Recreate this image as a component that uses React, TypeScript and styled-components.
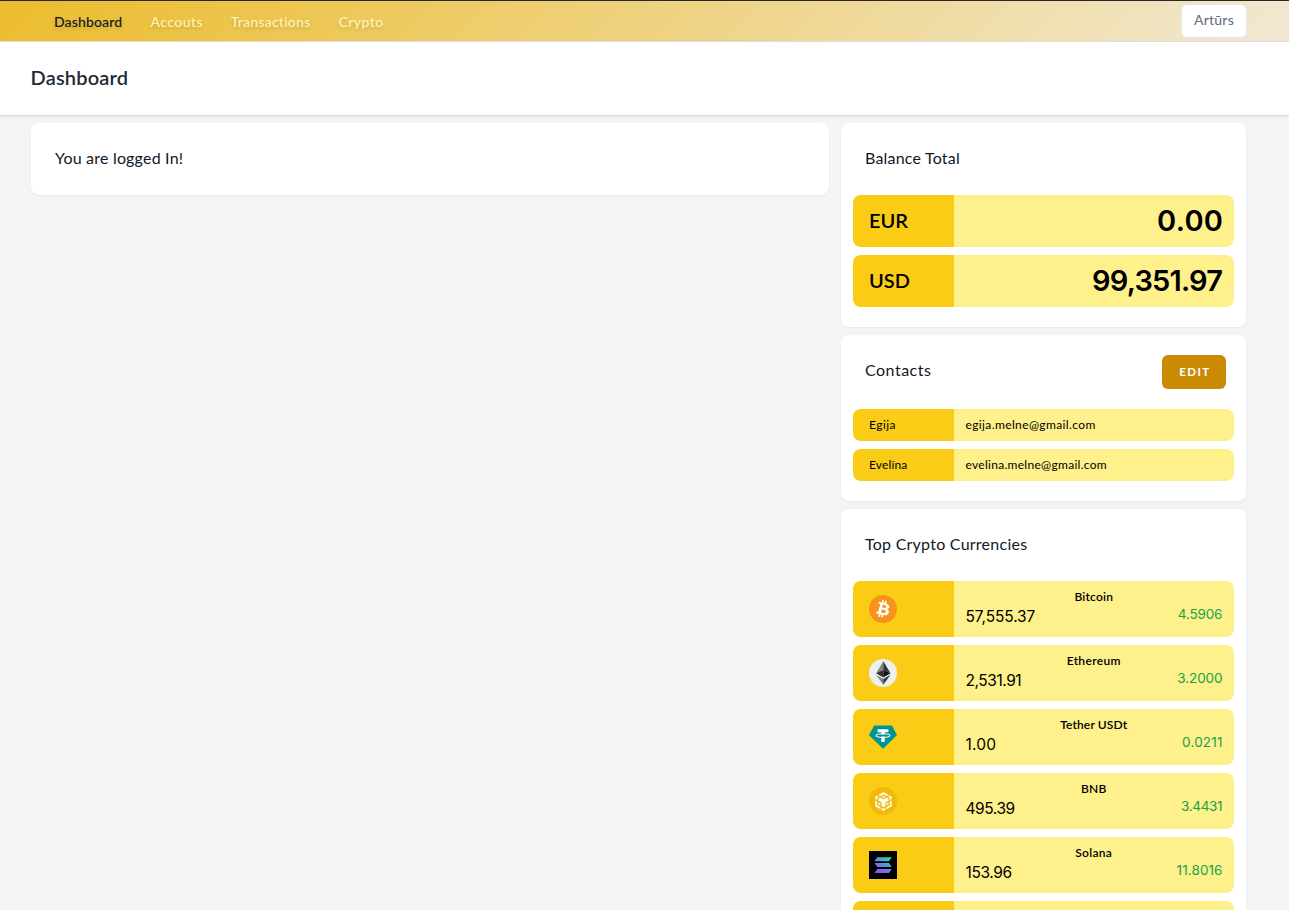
import React from 'react';
import styled, { createGlobalStyle } from 'styled-components';
import { SiBitcoin, SiBnbchain } from 'react-icons/si';

const GlobalStyle = createGlobalStyle`
  *, *::before, *::after { box-sizing: border-box; }
  html, body { height: 100%; }
  body {
    margin: 0;
    overflow: hidden;
    background: #f3f4f6;
    color: #000;
    font-family: Lato, 'Open Sans', sans-serif;
  }
`;

type Tracked = { $track?: number };

const Page = styled.div`
  height: 910px;
  overflow: hidden;
`;

const Nav = styled.nav`
  display: flex;
  justify-content: space-between;
  align-items: flex-start;
  height: 42px;
  padding: 3px 42px 0 54px;
  border-top: 1px solid #29262a;
  border-bottom: 1px solid #e3e3e4;
  background: linear-gradient(135deg, #ecbc2c, #f1e8d2) border-box;
`;

const NavLinks = styled.div`
  display: flex;
  gap: 28px;
  padding-top: 8px;
`;

const NavLink = styled.a<Tracked & { $active?: boolean; $width: number }>`
  width: ${p => p.$width}px;
  white-space: nowrap;
  font-size: 14px;
  font-weight: 500;
  line-height: 20px;
  letter-spacing: ${p => p.$track ?? 0}px;
  color: ${p => (p.$active ? '#111827' : '#fef4b4')};
  text-shadow: 0 2px 4px rgba(0, 0, 0, 0.15);
`;

const UserButton = styled.button`
  width: 66px;
  height: 34px;
  padding: 0 0 2px;
  border: 1px solid #e5e7eb;
  border-radius: 6px;
  background: #fff;
  color: #6b7280;
  font: 500 14px/20px Lato, sans-serif;
  letter-spacing: 0.2px;
`;

const Header = styled.header`
  position: relative;
  height: 73px;
  padding: 23px 31px;
  background: #fff;
  box-shadow: 0 1px 3px rgba(0, 0, 0, 0.1), 0 1px 2px rgba(0, 0, 0, 0.06);
`;

const Title = styled.h1`
  margin: 0 0 0 -0.5px;
  color: #1f2937;
  font-size: 20px;
  font-weight: 600;
  line-height: 25px;
  letter-spacing: 0.2px;
`;

const Main = styled.main`
  display: grid;
  grid-template-columns: 798px 405px;
  column-gap: 12px;
  align-items: start;
  padding: 8px 43px 0 31px;
`;

const Sidebar = styled.div`
  display: flex;
  flex-direction: column;
  gap: 8px;
`;

const Card = styled.section`
  border-radius: 8px;
  background: #fff;
  box-shadow: 0 1px 2px rgba(0, 0, 0, 0.05);
`;

const CardHeader = styled.div<{ $tall?: boolean }>`
  display: flex;
  justify-content: space-between;
  align-items: flex-start;
  height: ${p => (p.$tall ? 74 : 72)}px;
  padding: ${p => (p.$tall ? 20 : 23)}px 20px 0 24px;
`;

const CardTitle = styled.div<Tracked & { $offset?: number }>`
  padding-top: ${p => p.$offset ?? 0}px;
  color: #111827;
  font-size: 16px;
  line-height: 24px;
  letter-spacing: ${p => p.$track ?? 0}px;
`;

const EditButton = styled.button`
  width: 64px;
  height: 34px;
  padding: 0 0 0 2px;
  border: 0;
  border-radius: 6px;
  background: #ca8a04;
  color: #fff;
  font: 700 11.5px/16px Lato, sans-serif;
  letter-spacing: 1.4px;
`;

const Rows = styled.div`
  display: flex;
  flex-direction: column;
  gap: 8px;
  padding: 0 12px 20px;
`;

const Row = styled.div<{ $height: number }>`
  display: grid;
  grid-template-columns: 101px 1fr;
  height: ${p => p.$height}px;
  border-radius: 8px;
  overflow: hidden;
  background: #fef08a;
`;

const RowLabel = styled.div`
  display: flex;
  align-items: center;
  padding-left: 16px;
  background: #facc15;
`;

const Currency = styled.span<Tracked>`
  padding-bottom: 2px;
  font-size: 20px;
  font-weight: 600;
  letter-spacing: ${p => p.$track ?? 0}px;
`;

const Amount = styled.div<Tracked>`
  display: flex;
  justify-content: flex-end;
  align-items: center;
  padding: 0 ${p => 11 - (p.$track ?? 0)}px 1px 12px;
  font-family: Inter, sans-serif;
  font-size: 29px;
  font-weight: 600;
  letter-spacing: ${p => p.$track ?? 0}px;
`;

const Small = styled.span<Tracked>`
  font-size: 12px;
  line-height: 16px;
  letter-spacing: ${p => p.$track ?? 0}px;
`;

const ContactMail = styled.div`
  display: flex;
  align-items: center;
  padding-left: 11.5px;
`;

const CoinInfo = styled.div`
  padding: 8px 12px 0 11.5px;
`;

const CoinName = styled.div<Tracked>`
  text-align: center;
  font-size: 12px;
  font-weight: 600;
  line-height: 16px;
  letter-spacing: ${p => p.$track ?? 0}px;
`;

const CoinNumbers = styled.div`
  display: flex;
  justify-content: space-between;
  align-items: flex-start;
  font-family: Inter, sans-serif;
`;

const Price = styled.span<Tracked>`
  font-size: 15.5px;
  line-height: 24px;
  letter-spacing: ${p => p.$track ?? 0}px;
`;

const Change = styled.span<Tracked>`
  margin-right: ${p => -(p.$track ?? 0) - 0.5}px;
  color: #16a34a;
  font-size: 13.5px;
  line-height: 18px;
  letter-spacing: ${p => p.$track ?? 0}px;
`;

const CoinIcon = styled.span<{ $bg?: string }>`
  display: flex;
  align-items: center;
  justify-content: center;
  width: 28px;
  height: 28px;
  border-radius: 50%;
  background: ${p => p.$bg ?? 'transparent'};

  svg { display: block; }
`;

const SquareIcon = styled(CoinIcon)`
  border-radius: 0;
`;

const Bitcoin = () => (
  <CoinIcon>
    <svg width="28" height="28" viewBox="0 0 28 28">
      <circle cx="14" cy="14" r="12" fill="#fff" />
      <SiBitcoin size={28} color="#f7931a" />
    </svg>
  </CoinIcon>
);

const Ethereum = () => (
  <CoinIcon>
    <svg width="28" height="28" viewBox="0 0 28 28">
      <circle cx="14" cy="14" r="14" fill="#ecf0f1" />
      <path d="M14.3 2.3 7.1 14.2l7.2-3.2z" fill="#828384" />
      <path d="M14.3 2.3v8.7l7.2 3.2z" fill="#343434" />
      <path d="M7.1 14.2l7.2 4.2V11z" fill="#2f3030" />
      <path d="M21.5 14.2l-7.2 4.2V11z" fill="#131313" />
      <path d="M7.1 15.7l7.2 10v-5.8z" fill="#828384" />
      <path d="M21.5 15.7l-7.2 10v-5.8z" fill="#343434" />
    </svg>
  </CoinIcon>
);

const Tether = () => (
  <CoinIcon>
    <svg width="28" height="28" viewBox="0 0 28 28">
      <path d="M5.7 2.6h16.6a1 1 0 0 1 .8.5l4.7 8.3a.9.9 0 0 1-.2 1.1L14.6 25.3a.9.9 0 0 1-1.2 0L.4 12.5a.9.9 0 0 1-.2-1.1l4.7-8.3a1 1 0 0 1 .8-.5z" fill="#009393" />
      <path d="M8.6 6.2h10.8v3.1h-3.7v2.2h-3.4V9.3H8.6z" fill="#fff" />
      <ellipse cx="14" cy="12.6" rx="7" ry="1.9" fill="none" stroke="#fff" strokeWidth="1.1" />
      <path d="M12.3 13.4h3.4v5.6h-3.4z" fill="#fff" />
    </svg>
  </CoinIcon>
);

const Bnb = () => (
  <CoinIcon $bg="#f0b90b">
    <SiBnbchain size={19} color="#fffdf0" />
  </CoinIcon>
);

const Solana = () => (
  <SquareIcon>
    <svg width="28" height="28" viewBox="0 0 28 28">
      <defs>
        <linearGradient id="sol" gradientUnits="userSpaceOnUse" x1="7" y1="23" x2="21" y2="5">
          <stop offset="0" stopColor="#a23cff" />
          <stop offset="0.45" stopColor="#6f7be6" />
          <stop offset="1" stopColor="#14f0a0" />
        </linearGradient>
      </defs>
      <path d="M0 0h28v28H0z" fill="#000" />
      <path d="M8.3 6.2h14.5l-2.9 4H5.4zM5.4 12.1h14.5l2.9 3.9H8.3zM8.3 17.9h14.5l-2.9 4H5.4z" fill="url(#sol)" />
    </svg>
  </SquareIcon>
);

const links = [
  { text: 'Dashboard', width: 68.5, track: 0.15, active: true },
  { text: 'Accouts', width: 52.2, track: 0.45 },
  { text: 'Transactions', width: 79.8, track: 0.25 },
  { text: 'Crypto', width: 46, track: 0.45 },
];

const balances = [
  { code: 'EUR', codeTrack: 0, amount: '0.00', track: 0.3 },
  { code: 'USD', codeTrack: 0, amount: '99,351.97', track: -0.8 },
];

const contacts = [
  { name: 'Egija', nameTrack: 0.45, mail: 'egija.melne@gmail.com', track: 0.38 },
  { name: 'Evelīna', nameTrack: 0.15, mail: 'evelina.melne@gmail.com', track: 0.29 },
];

const coins = [
  { icon: <Bitcoin />, name: 'Bitcoin', nameTrack: 0.2, price: '57,555.37', priceTrack: -0.12, change: '4.5906', changeTrack: -0.15 },
  { icon: <Ethereum />, name: 'Ethereum', nameTrack: 0.35, price: '2,531.91', priceTrack: -0.45, change: '3.2000', changeTrack: -0.1 },
  { icon: <Tether />, name: 'Tether USDt', nameTrack: 0.15, price: '1.00', priceTrack: 0.2, change: '0.0211', changeTrack: 0.2 },
  { icon: <Bnb />, name: 'BNB', nameTrack: 0.15, price: '495.39', priceTrack: -0.45, change: '3.4431', changeTrack: -0.35 },
  { icon: <Solana />, name: 'Solana', nameTrack: 0.3, price: '153.96', priceTrack: -0.4, change: '11.8016', changeTrack: 0.1 },
];

export default function App() {
  return (
    <Page>
      <GlobalStyle />
      <Nav>
        <NavLinks>
          {links.map(l => (
            <NavLink key={l.text} $active={l.active} $width={l.width} $track={l.track}>{l.text}</NavLink>
          ))}
        </NavLinks>
        <UserButton>Artūrs</UserButton>
      </Nav>
      <Header>
        <Title>Dashboard</Title>
      </Header>
      <Main>
        <Card>
          <CardHeader>
            <CardTitle $track={0.2}>You are logged In!</CardTitle>
          </CardHeader>
        </Card>
        <Sidebar>
          <Card>
            <CardHeader>
              <CardTitle $track={0.2}>Balance Total</CardTitle>
            </CardHeader>
            <Rows>
              {balances.map(b => (
                <Row key={b.code} $height={52}>
                  <RowLabel><Currency $track={b.codeTrack}>{b.code}</Currency></RowLabel>
                  <Amount $track={b.track}>{b.amount}</Amount>
                </Row>
              ))}
            </Rows>
          </Card>
          <Card>
            <CardHeader $tall>
              <CardTitle $track={0.5} $offset={3}>Contacts</CardTitle>
              <EditButton>EDIT</EditButton>
            </CardHeader>
            <Rows>
              {contacts.map(c => (
                <Row key={c.mail} $height={32}>
                  <RowLabel><Small $track={c.nameTrack}>{c.name}</Small></RowLabel>
                  <ContactMail><Small $track={c.track}>{c.mail}</Small></ContactMail>
                </Row>
              ))}
            </Rows>
          </Card>
          <Card>
            <CardHeader>
              <CardTitle $track={0.25}>Top Crypto Currencies</CardTitle>
            </CardHeader>
            <Rows>
              {coins.map(c => (
                <Row key={c.name} $height={56}>
                  <RowLabel>{c.icon}</RowLabel>
                  <CoinInfo>
                    <CoinName $track={c.nameTrack}>{c.name}</CoinName>
                    <CoinNumbers>
                      <Price $track={c.priceTrack}>{c.price}</Price>
                      <Change $track={c.changeTrack}>{c.change}</Change>
                    </CoinNumbers>
                  </CoinInfo>
                </Row>
              ))}
              <Row $height={56}>
                <RowLabel />
              </Row>
            </Rows>
          </Card>
        </Sidebar>
      </Main>
    </Page>
  );
}
